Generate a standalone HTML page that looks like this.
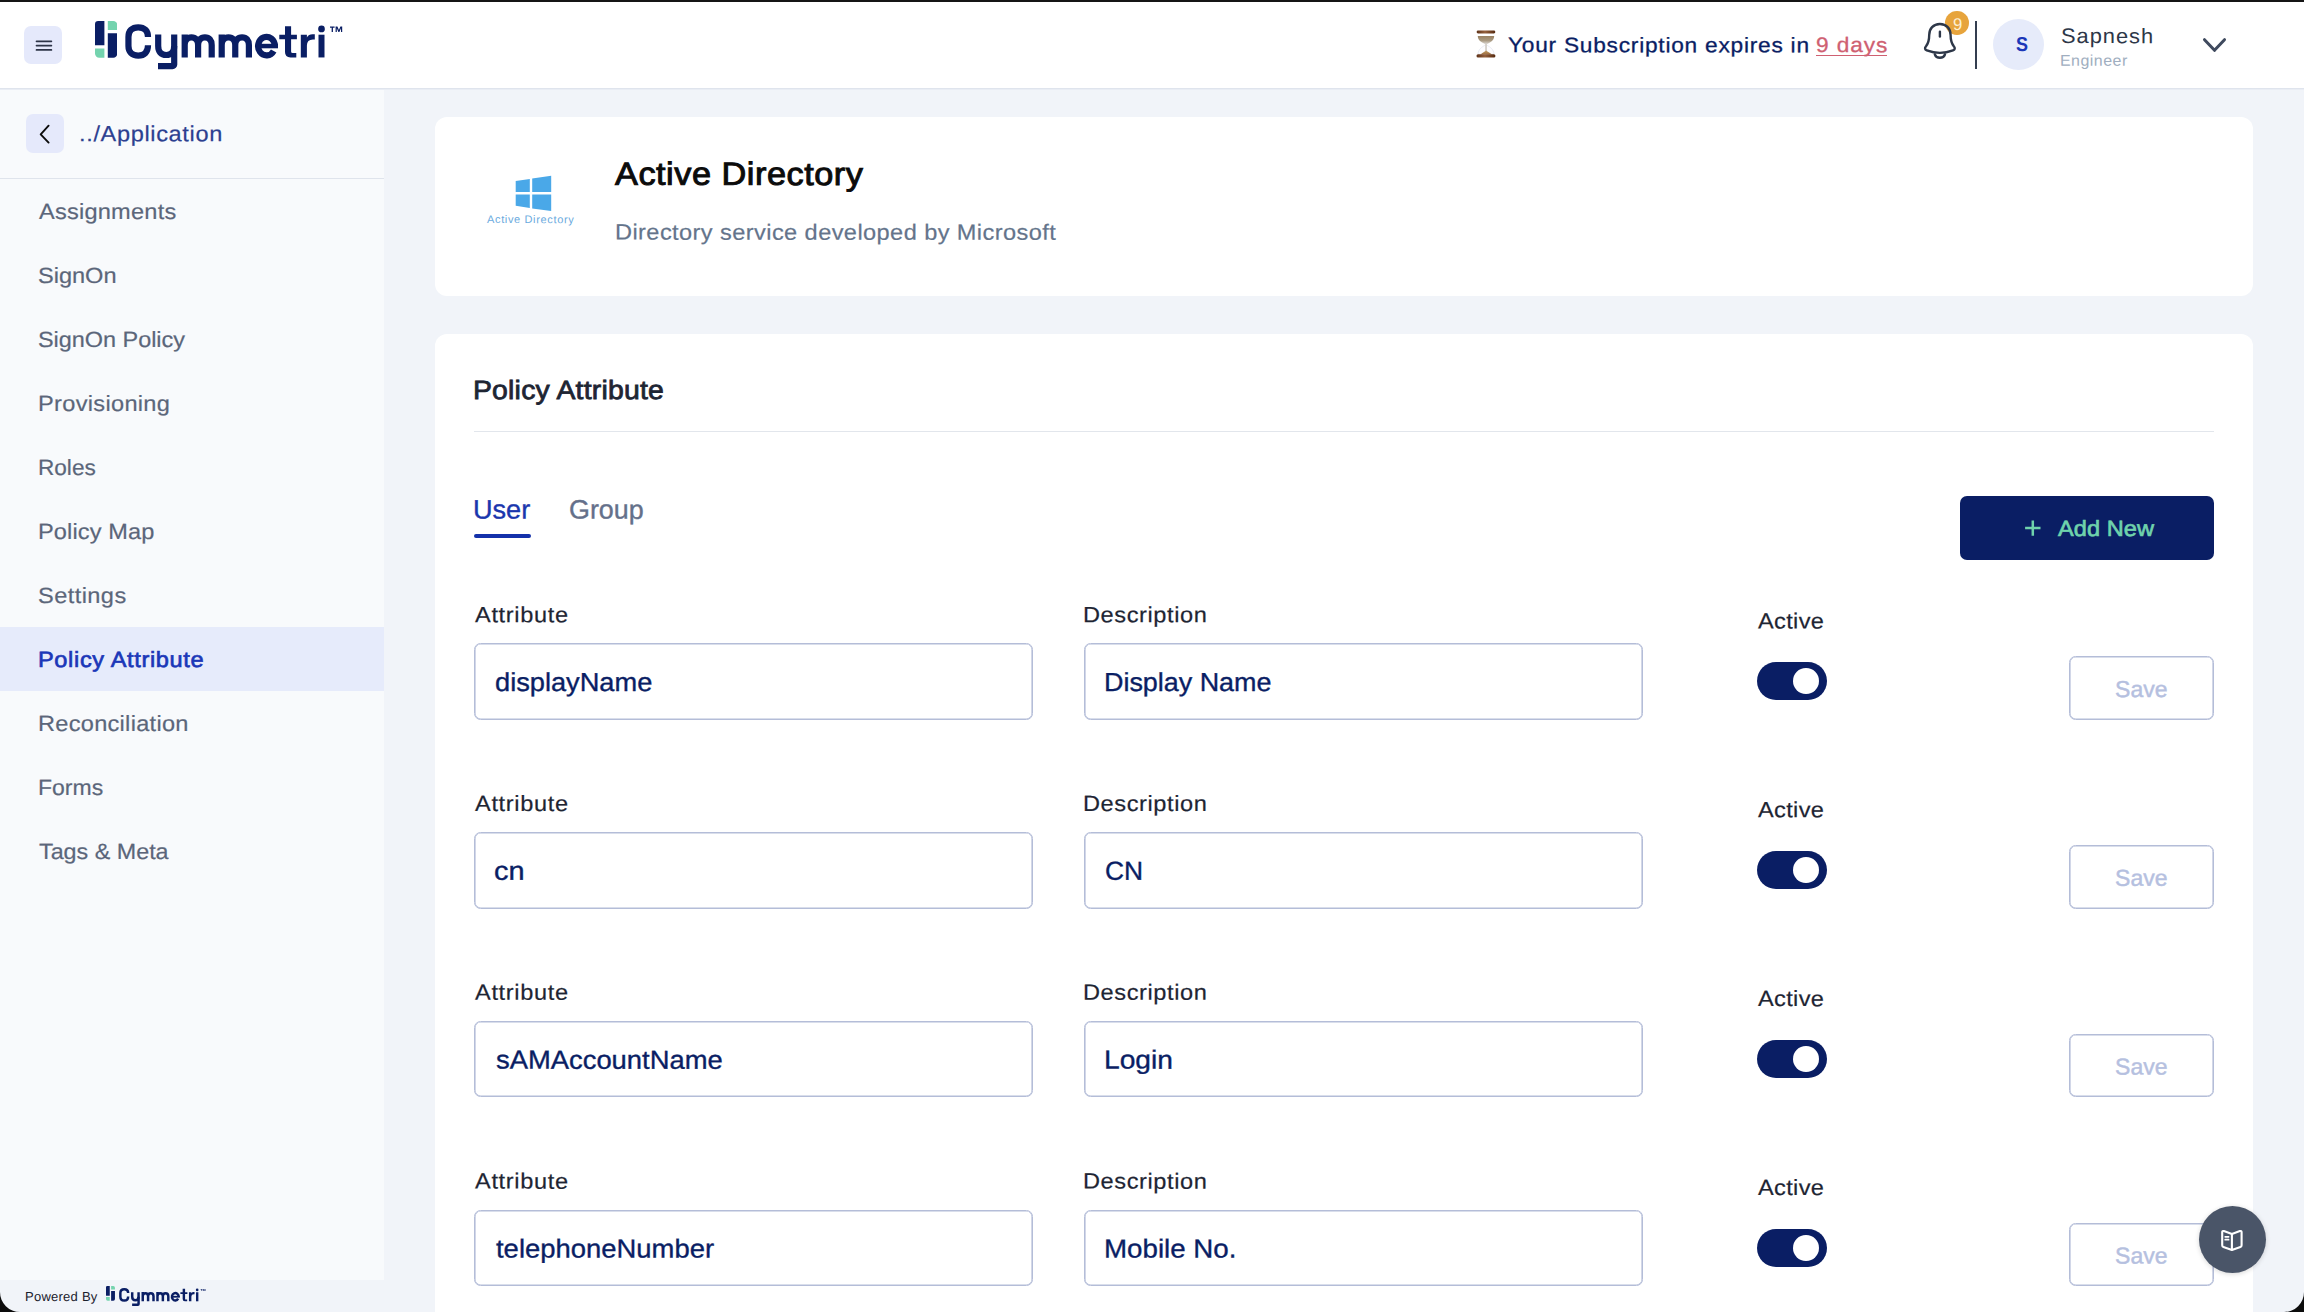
<!DOCTYPE html>
<html lang="en"><head><meta charset="utf-8"><title>Cymmetri - Policy Attribute</title>
<style>
html,body{margin:0;padding:0}
body{width:2304px;height:1312px;overflow:hidden;position:relative;background:#f1f4f9;font-family:"Liberation Sans",sans-serif}
.g{position:absolute;left:0;top:0;width:0;height:0}
.a{position:absolute}
.t{position:absolute;margin:0;white-space:pre;line-height:1;transform-origin:0 50%;font-family:"Liberation Sans",sans-serif;text-decoration:none}
.inp{position:absolute;box-sizing:border-box;border:1px solid #b4bdd8;box-shadow:inset 0 0 0 0.6px #b4bdd8;border-radius:6.5px;background:#fff;height:76.7px;width:559px}
.tog{position:absolute;width:70px;height:38.4px;border-radius:19.2px;background:#0a1e64}
.tog i{position:absolute;left:36.4px;top:6.4px;width:25.8px;height:25.8px;border-radius:50%;background:#fff}
.save{position:absolute;box-sizing:border-box;border:1px solid #b4bdd8;box-shadow:inset 0 0 0 0.6px #b4bdd8;border-radius:6.5px;background:#fff;left:2069px;width:145px;height:63.6px}
@media (max-width:1200px){html{zoom:.5}}
</style></head><body>
<header class="g">
<div class="a" style="left:0;top:0;width:2304px;height:88px;background:#fff"></div>
<div class="a" style="left:0;top:88px;width:2304px;height:1px;background:#dfe4ed"></div>
<div class="a" style="left:0;top:89px;width:2304px;height:1px;background:#e9edf4"></div>
<div class="a" style="left:24px;top:26px;width:38px;height:38px;border-radius:7px;background:#e5e9fb"></div>
<svg class="a" style="left:30px;top:36px" width="28" height="20" viewBox="30 36 28 20" stroke="#2d3447" stroke-width="1.7" stroke-linecap="round"><path d="M36.5 41.3H51.4M36.5 45.55H51.4M36.5 49.9H51.4"/></svg>
<svg class="a" style="left:94.5px;top:20.8px" width="22.60" height="36.90" viewBox="0 0 22.6 36.9">
<path d="M0 3.2A3.2 3.2 0 0 1 3.2 0H9.4V24.2H0Z" fill="#0a1e64"/>
<path d="M0 27.4H9.4V36.7H4.2A4.2 4.2 0 0 1 0 32.5Z" fill="#74d3ae"/>
<path d="M12.8 0H18.2A4.2 4.2 0 0 1 22.4 4.2V8.9H12.8Z" fill="#74d3ae"/>
<path d="M12.8 12.2H22.4V32.5A4.2 4.2 0 0 1 18.2 36.7H12.8Z" fill="#0a1e64"/>
</svg>
<svg class="a" style="left:120px;top:14px" width="230.00" height="62.00" viewBox="120 14 230 62"><g fill="none" stroke="#0a1e64" stroke-width="6.2" stroke-linejoin="miter">
<path d="M148 36.9C148.00 30.79 144.48 27.35 138.22 27.35C131.97 27.35 128.45 30.79 128.45 36.90V46.0C128.45 52.11 131.97 55.55 138.22 55.55C144.48 55.55 148.00 52.11 148.00 45.3"/>
<path d="M158.2 34.5V46.0C158.20 51.76 161.08 55.00 166.20 55.00C171.32 55.00 174.20 51.76 174.20 46.00"/>
<path d="M174.2 34.5V64.4A1.7 1.7 0 0 1 172.5 66.1H158"/>
<path d="M184.7 34.4V57.45M184.7 45C184.70 40.14 187.11 37.40 191.40 37.40C195.69 37.40 198.10 40.14 198.10 45.00V57.45M198.1 45C198.10 40.14 200.55 37.40 204.90 37.40C209.25 37.40 211.70 40.14 211.70 45.00V57.45"/>
<path d="M221.7 34.4V57.45M221.7 45C221.70 40.14 224.14 37.40 228.47 37.40C232.81 37.40 235.25 40.14 235.25 45.00V57.45M235.25 45C235.25 40.14 237.71 37.40 242.07 37.40C246.44 37.40 248.90 40.14 248.90 45.00V57.45"/>
<path d="M274.9 46.1A8.4 9.25 0 1 0 273.7 50.9"/>
</g>
<g fill="#0a1e64">
<rect x="258" y="43.8" width="20" height="4.5"/>
<path d="M285 26.2H291.1V34.7H296.9V39.2H291.1V51.4Q291.1 52.9 292.6 52.9H296.3V57.45H290.5Q285 57.45 285 52V39.2H279.3V34.7H285Z"/>
<path d="M300.8 34.7H306.9V37.4Q308.6 34.3 312.6 34.3H314.8V39.6H312.9Q306.9 39.6 306.9 45.6V57.45H300.8Z"/>
<rect x="318.5" y="34.7" width="6" height="22.75"/><circle cx="321.5" cy="28.9" r="3.35"/>
<path d="M330 26.5H334.6V27.7H332.95V31.9H331.65V27.7H330Z"/>
<path d="M335.6 31.9V26.5H337.4L338.9 30.1L340.4 26.5H342.2V31.9H341V28.3L339.4 31.9H338.4L336.8 28.3V31.9Z"/>
</g></svg>
<svg class="a" style="left:1476px;top:30px" width="20" height="28" viewBox="0 0 20 28">
<defs>
<linearGradient id="hgc" x1="0" x2="1" y1="0" y2="0"><stop offset="0" stop-color="#5e3118"/><stop offset=".45" stop-color="#94603c"/><stop offset="1" stop-color="#55290f"/></linearGradient>
<linearGradient id="hgs" x1="0" x2="0" y1="0" y2="1"><stop offset="0" stop-color="#9a8262"/><stop offset=".55" stop-color="#a8987f"/><stop offset="1" stop-color="#d9d5d0"/></linearGradient>
<linearGradient id="hgb" x1="0" x2="0" y1="0" y2="1"><stop offset="0" stop-color="#c7a26a"/><stop offset="1" stop-color="#9a6a3c"/></linearGradient>
</defs>
<path d="M8.9 15.2C6.5 16.8 2.2 19 2 24.3H18C17.8 19 13.5 16.8 11.1 15.2Z" fill="#fdfdff" stroke="#dfe3ee" stroke-width=".7"/>
<path d="M1.75 6.1H18.2C18.2 11 13 13.2 11.3 13.9H8.9C7 13.2 1.75 11 1.75 6.1Z" fill="url(#hgs)"/>
<rect x="9.1" y="13.6" width="1.9" height="7.4" fill="#d6d2cd"/>
<path d="M10.1 20.4C11.6 21.8 14.8 23 15.9 24.6H4.6C5.6 23 8.6 21.8 10.1 20.4Z" fill="url(#hgb)"/>
<rect x=".65" y=".5" width="18.65" height="3" rx="1.4" fill="url(#hgc)"/>
<rect x=".5" y="24.2" width="18.9" height="3.3" rx="1.5" fill="url(#hgc)"/>
</svg>
<div class="a" style="left:1815.6px;top:54.6px;width:71px;height:1.6px;background:#cf6071"></div>
<div class="a" style="left:1945.1px;top:10.9px;width:23.8px;height:23.8px;border-radius:50%;background:#e7a43c"></div>
<svg class="a" style="left:1920px;top:18px" width="40" height="44" viewBox="1920 18 40 44" fill="none" stroke="#2d3748" stroke-width="2.4" stroke-linecap="round" stroke-linejoin="round">
<path d="M1939.9 23.95C1946.5 23.95 1950.6 28.6 1950.6 35C1950.6 40 1951.2 43 1953.8 46.3C1955.3 48.1 1955 49.7 1953 50.4C1949 51.9 1944 52.9 1939.9 52.9C1935.8 52.9 1930.8 51.9 1926.8 50.4C1924.8 49.7 1924.5 48.1 1926 46.3C1928.6 43 1929.2 40 1929.2 35C1929.2 28.6 1933.3 23.95 1939.9 23.95Z"/>
<path d="M1934.8 54.3C1935.6 56.6 1937.5 57.8 1939.9 57.8C1942.3 57.8 1944.2 56.6 1945 54.3"/>
<path d="M1939.9 31.8V36.6"/>
</svg>
<div class="a" style="left:1975px;top:21px;width:2px;height:47.5px;background:#343e50"></div>
<div class="a" style="left:1992.8px;top:19px;width:51.2px;height:51.2px;border-radius:50%;background:#e6ebfa"></div>
<svg class="a" style="left:2200px;top:35px" width="30" height="20" viewBox="0 0 30 20" fill="none" stroke="#3f4a5e" stroke-width="3" stroke-linecap="round" stroke-linejoin="round"><path d="M4.5 4.7L14.5 15.3L24.5 4.7"/></svg>
<span class="t" style="left:1507.7px;top:34px;font-size:21px;font-weight:400;color:#0a1e64;letter-spacing:0.711px;transform:translateY(0.1px) scaleX(1.08) rotate(.03deg);-webkit-text-stroke:0.3px #0a1e64;">Your Subscription expires in</span>
<a class="t" style="left:1815.6px;top:34px;font-size:21px;font-weight:400;color:#cf6071;letter-spacing:0.818px;transform:translateY(0.1px) scaleX(1.08) rotate(.03deg);-webkit-text-stroke:0.3px #cf6071;">9 days</a>
<span class="t" style="left:1952.9px;top:16px;font-size:17px;font-weight:400;color:#fdf0d5;letter-spacing:0px;transform:scaleX(0.98) rotate(.03deg);">9</span>
<span class="t" style="left:2016.0px;top:34px;font-size:20px;font-weight:700;color:#1b37b8;letter-spacing:0px;transform:scaleX(0.9) rotate(.03deg);">S</span>
<span class="t" style="left:2060.8px;top:25px;font-size:21px;font-weight:400;color:#2d3748;letter-spacing:0.943px;transform:translateY(0.1px) scaleX(1.04) rotate(.03deg);">Sapnesh</span>
<span class="t" style="left:2059.97px;top:52px;font-size:15.5px;font-weight:400;color:#a0aec0;letter-spacing:0.456px;transform:translateY(0.7px) scaleX(1.03) rotate(.03deg);">Engineer</span>
</header>
<aside class="g"><nav>
<div class="a" style="left:0;top:90px;width:384px;height:1190px;background:#f8fafc"></div>
<div class="a" style="left:0;top:178px;width:384px;height:1.4px;background:#dfe4ec"></div>
<div class="a" style="left:0;top:627px;width:384px;height:64px;background:#e6ebfb"></div>
<div class="a" style="left:25.6px;top:114.4px;width:38.4px;height:38.4px;border-radius:7px;background:#e5e9fb"></div>
<svg class="a" style="left:36px;top:122px" width="18" height="25" viewBox="0 0 18 25" fill="none" stroke="#0c0c0c" stroke-width="1.9" stroke-linecap="round" stroke-linejoin="round"><path d="M12.6 3.7L4.7 12.3L12.6 20.6"/></svg>
<svg class="a" style="left:106px;top:1286.4px" width="9.04" height="14.76" viewBox="0 0 22.6 36.9">
<path d="M0 3.2A3.2 3.2 0 0 1 3.2 0H9.4V24.2H0Z" fill="#0a1e64"/>
<path d="M0 27.4H9.4V36.7H4.2A4.2 4.2 0 0 1 0 32.5Z" fill="#74d3ae"/>
<path d="M12.8 0H18.2A4.2 4.2 0 0 1 22.4 4.2V8.9H12.8Z" fill="#74d3ae"/>
<path d="M12.8 12.2H22.4V32.5A4.2 4.2 0 0 1 18.2 36.7H12.8Z" fill="#0a1e64"/>
</svg>
<svg class="a" style="left:116.9px;top:1283.9px" width="91.54" height="24.68" viewBox="120 14 230 62"><g fill="none" stroke="#0a1e64" stroke-width="6.2" stroke-linejoin="miter">
<path d="M148 36.9C148.00 30.79 144.48 27.35 138.22 27.35C131.97 27.35 128.45 30.79 128.45 36.90V46.0C128.45 52.11 131.97 55.55 138.22 55.55C144.48 55.55 148.00 52.11 148.00 45.3"/>
<path d="M158.2 34.5V46.0C158.20 51.76 161.08 55.00 166.20 55.00C171.32 55.00 174.20 51.76 174.20 46.00"/>
<path d="M174.2 34.5V64.4A1.7 1.7 0 0 1 172.5 66.1H158"/>
<path d="M184.7 34.4V57.45M184.7 45C184.70 40.14 187.11 37.40 191.40 37.40C195.69 37.40 198.10 40.14 198.10 45.00V57.45M198.1 45C198.10 40.14 200.55 37.40 204.90 37.40C209.25 37.40 211.70 40.14 211.70 45.00V57.45"/>
<path d="M221.7 34.4V57.45M221.7 45C221.70 40.14 224.14 37.40 228.47 37.40C232.81 37.40 235.25 40.14 235.25 45.00V57.45M235.25 45C235.25 40.14 237.71 37.40 242.07 37.40C246.44 37.40 248.90 40.14 248.90 45.00V57.45"/>
<path d="M274.9 46.1A8.4 9.25 0 1 0 273.7 50.9"/>
</g>
<g fill="#0a1e64">
<rect x="258" y="43.8" width="20" height="4.5"/>
<path d="M285 26.2H291.1V34.7H296.9V39.2H291.1V51.4Q291.1 52.9 292.6 52.9H296.3V57.45H290.5Q285 57.45 285 52V39.2H279.3V34.7H285Z"/>
<path d="M300.8 34.7H306.9V37.4Q308.6 34.3 312.6 34.3H314.8V39.6H312.9Q306.9 39.6 306.9 45.6V57.45H300.8Z"/>
<rect x="318.5" y="34.7" width="6" height="22.75"/><circle cx="321.5" cy="28.9" r="3.35"/>
<path d="M330 26.5H334.6V27.7H332.95V31.9H331.65V27.7H330Z"/>
<path d="M335.6 31.9V26.5H337.4L338.9 30.1L340.4 26.5H342.2V31.9H341V28.3L339.4 31.9H338.4L336.8 28.3V31.9Z"/>
</g></svg>
<a class="t" style="left:78.66px;top:123px;font-size:22px;font-weight:400;color:#2c4090;letter-spacing:0.61px;transform:translateY(0.2px) scaleX(1.07) rotate(.03deg);-webkit-text-stroke:0.2px #2c4090;">../Application</a>
<a class="t" style="left:39.3px;top:200px;font-size:22px;font-weight:400;color:#5b667a;letter-spacing:0.228px;transform:translateY(0.9px) scaleX(1.07) rotate(.03deg);-webkit-text-stroke:0.2px #5b667a;">Assignments</a>
<a class="t" style="left:38.23px;top:264px;font-size:22px;font-weight:400;color:#5b667a;letter-spacing:-0.005px;transform:translateY(0.9px) scaleX(1.07) rotate(.03deg);-webkit-text-stroke:0.2px #5b667a;">SignOn</a>
<a class="t" style="left:38.24px;top:328px;font-size:22px;font-weight:400;color:#5b667a;letter-spacing:-0.004px;transform:translateY(0.9px) scaleX(1.064) rotate(.03deg);-webkit-text-stroke:0.2px #5b667a;">SignOn Policy</a>
<a class="t" style="left:38.23px;top:392px;font-size:22px;font-weight:400;color:#5b667a;letter-spacing:0.311px;transform:translateY(0.9px) scaleX(1.07) rotate(.03deg);-webkit-text-stroke:0.2px #5b667a;">Provisioning</a>
<a class="t" style="left:38.27px;top:456px;font-size:22px;font-weight:400;color:#5b667a;letter-spacing:0.004px;transform:translateY(0.9px) scaleX(1.026) rotate(.03deg);-webkit-text-stroke:0.2px #5b667a;">Roles</a>
<a class="t" style="left:38.23px;top:520px;font-size:22px;font-weight:400;color:#5b667a;letter-spacing:0.124px;transform:translateY(0.9px) scaleX(1.07) rotate(.03deg);-webkit-text-stroke:0.2px #5b667a;">Policy Map</a>
<a class="t" style="left:38.23px;top:584px;font-size:22px;font-weight:400;color:#5b667a;letter-spacing:0.416px;transform:translateY(0.9px) scaleX(1.07) rotate(.03deg);-webkit-text-stroke:0.2px #5b667a;">Settings</a>
<a class="t" style="left:38.23px;top:648px;font-size:22px;font-weight:400;color:#1b37b8;letter-spacing:0.618px;transform:translateY(0.9px) scaleX(1.07) rotate(.03deg);-webkit-text-stroke:0.65px #1b37b8;">Policy Attribute</a>
<a class="t" style="left:38.23px;top:712px;font-size:22px;font-weight:400;color:#5b667a;letter-spacing:0.276px;transform:translateY(0.9px) scaleX(1.07) rotate(.03deg);-webkit-text-stroke:0.2px #5b667a;">Reconciliation</a>
<a class="t" style="left:38.25px;top:776px;font-size:22px;font-weight:400;color:#5b667a;letter-spacing:0.003px;transform:translateY(0.9px) scaleX(1.045) rotate(.03deg);-webkit-text-stroke:0.2px #5b667a;">Forms</a>
<a class="t" style="left:39.3px;top:840px;font-size:22px;font-weight:400;color:#5b667a;letter-spacing:-0.002px;transform:translateY(0.9px) scaleX(1.06) rotate(.03deg);-webkit-text-stroke:0.2px #5b667a;">Tags &amp; Meta</a>
<span class="t" style="left:24.6px;top:1290px;font-size:13px;font-weight:400;color:#1a202c;letter-spacing:0.245px;transform:rotate(.03deg);">Powered By</span>
</nav></aside>
<main class="g"><section>
<div class="a" style="left:435px;top:117px;width:1818px;height:179px;border-radius:12px;background:#fff"></div>
<svg class="a" style="left:514px;top:174px" width="40" height="40" viewBox="514 174 40 40"><g fill="#4aa8e8">
<path d="M515.7 181L529.8 179V192H515.7Z"/><path d="M532.2 178.4L551.2 175.7V192H532.2Z"/>
<path d="M515.7 194.6H529.8V207.9L515.7 205.8Z"/><path d="M532.2 194.6H551.2V211L532.2 208.4Z"/></g></svg>
<span class="t" style="left:487.4px;top:214px;font-size:11px;font-weight:400;color:#6aaade;letter-spacing:0.646px;transform:translateY(0.1px) rotate(.03deg);">Active Directory</span>
<h1 class="t" style="left:615.0px;top:157px;font-size:32px;font-weight:400;color:#0b0b0b;letter-spacing:0.509px;transform:translateY(0.8px) scaleX(1.07) rotate(.03deg);-webkit-text-stroke:0.95px #0b0b0b;">Active Directory</h1>
<p class="t" style="left:614.53px;top:221px;font-size:22px;font-weight:400;color:#64748b;letter-spacing:0.405px;transform:translateY(0.6px) scaleX(1.07) rotate(.03deg);-webkit-text-stroke:0.2px #64748b;">Directory service developed by Microsoft</p>
</section>
<section>
<div class="a" style="left:435px;top:334px;width:1818px;height:1000px;border-radius:12px;background:#fff"></div>
<div class="a" style="left:474px;top:430.5px;width:1740px;height:1.5px;background:#e2e6ec"></div>
<div class="a" style="left:474px;top:534.1px;width:57px;height:3.6px;border-radius:2px;background:#1431aa"></div>
<div class="a" style="left:1960px;top:496px;width:254px;height:64px;border-radius:7px;background:#0a1e64"></div>
<svg class="a" style="left:2022px;top:518px" width="22" height="22" viewBox="2022 518 22 22" fill="none" stroke="#6fd3ac" stroke-width="2.5"><path d="M2032.8 520.4V535.8M2025.1 528.1H2040.5"/></svg>
<div class="inp" style="left:473.7px;top:643.1px"></div>
<div class="inp" style="left:1083.7px;top:643.1px"></div>
<div class="tog" style="left:1757px;top:662.1px"><i></i></div>
<div class="save" style="top:656.2px"></div>
<div class="inp" style="left:473.7px;top:831.9px"></div>
<div class="inp" style="left:1083.7px;top:831.9px"></div>
<div class="tog" style="left:1757px;top:850.9px"><i></i></div>
<div class="save" style="top:845.0px"></div>
<div class="inp" style="left:473.7px;top:1020.7px"></div>
<div class="inp" style="left:1083.7px;top:1020.7px"></div>
<div class="tog" style="left:1757px;top:1039.7px"><i></i></div>
<div class="save" style="top:1033.8px"></div>
<div class="inp" style="left:473.7px;top:1209.5px"></div>
<div class="inp" style="left:1083.7px;top:1209.5px"></div>
<div class="tog" style="left:1757px;top:1228.5px"><i></i></div>
<div class="save" style="top:1222.6px"></div>
<h2 class="t" style="left:472.66px;top:377px;font-size:26.5px;font-weight:400;color:#1e2533;letter-spacing:0.2px;transform:scaleX(1.07) rotate(.03deg);-webkit-text-stroke:0.78px #1e2533;">Policy Attribute</h2>
<a class="t" style="left:473.06px;top:496px;font-size:26.5px;font-weight:400;color:#1a36ad;letter-spacing:-0.005px;transform:translateY(0.6px) scaleX(1.022) rotate(.03deg);-webkit-text-stroke:0.35px #1a36ad;">User</a>
<a class="t" style="left:569.39px;top:496px;font-size:26.5px;font-weight:400;color:#64708a;letter-spacing:-0.005px;transform:translateY(0.6px) scaleX(1.014) rotate(.03deg);-webkit-text-stroke:0.35px #64708a;">Group</a>
<span class="t" style="left:2058.1px;top:517px;font-size:22px;font-weight:400;color:#6fd3ac;letter-spacing:0.072px;transform:translateY(0.9px) scaleX(1.07) rotate(.03deg);-webkit-text-stroke:0.65px #6fd3ac;">Add New</span>
<label class="t" style="left:474.6px;top:604px;font-size:22px;font-weight:400;color:#1e2533;letter-spacing:0.641px;transform:translateY(0.2px) scaleX(1.07) rotate(.03deg);-webkit-text-stroke:0.2px #1e2533;">Attribute</label>
<label class="t" style="left:1083.03px;top:604px;font-size:22px;font-weight:400;color:#1e2533;letter-spacing:0.565px;transform:translateY(0.2px) scaleX(1.07) rotate(.03deg);-webkit-text-stroke:0.2px #1e2533;">Description</label>
<label class="t" style="left:1757.6px;top:610px;font-size:22px;font-weight:400;color:#1e2533;letter-spacing:0.327px;transform:translateY(0.5px) scaleX(1.07) rotate(.03deg);-webkit-text-stroke:0.2px #1e2533;">Active</label>
<span class="t" style="left:494.55px;top:669px;font-size:26px;font-weight:400;color:#0a1e64;letter-spacing:-0.002px;transform:scaleX(1.047) rotate(.03deg);-webkit-text-stroke:0.35px #0a1e64;">displayName</span>
<span class="t" style="left:1103.63px;top:669px;font-size:26px;font-weight:400;color:#0a1e64;letter-spacing:-0.004px;transform:scaleX(1.035) rotate(.03deg);-webkit-text-stroke:0.35px #0a1e64;">Display Name</span>
<span class="t" style="left:2115.0px;top:678px;font-size:23px;font-weight:400;color:#b5c0df;letter-spacing:0.056px;transform:rotate(.03deg);-webkit-text-stroke:0.45px #b5c0df;">Save</span>
<label class="t" style="left:474.6px;top:793px;font-size:22px;font-weight:400;color:#1e2533;letter-spacing:0.641px;transform:scaleX(1.07) rotate(.03deg);-webkit-text-stroke:0.2px #1e2533;">Attribute</label>
<label class="t" style="left:1083.03px;top:793px;font-size:22px;font-weight:400;color:#1e2533;letter-spacing:0.565px;transform:scaleX(1.07) rotate(.03deg);-webkit-text-stroke:0.2px #1e2533;">Description</label>
<label class="t" style="left:1757.6px;top:799px;font-size:22px;font-weight:400;color:#1e2533;letter-spacing:0.327px;transform:translateY(0.3px) scaleX(1.07) rotate(.03deg);-webkit-text-stroke:0.2px #1e2533;">Active</label>
<span class="t" style="left:494.49px;top:857px;font-size:26px;font-weight:400;color:#0a1e64;letter-spacing:-0.0px;transform:translateY(0.8px) scaleX(1.112) rotate(.03deg);-webkit-text-stroke:0.35px #0a1e64;">cn</span>
<span class="t" style="left:1104.68px;top:857px;font-size:26px;font-weight:400;color:#0a1e64;letter-spacing:0.002px;transform:translateY(0.8px) scaleX(1.015) rotate(.03deg);-webkit-text-stroke:0.35px #0a1e64;">CN</span>
<span class="t" style="left:2115.0px;top:866px;font-size:23px;font-weight:400;color:#b5c0df;letter-spacing:0.056px;transform:translateY(0.8px) rotate(.03deg);-webkit-text-stroke:0.45px #b5c0df;">Save</span>
<label class="t" style="left:474.6px;top:981px;font-size:22px;font-weight:400;color:#1e2533;letter-spacing:0.641px;transform:translateY(0.8px) scaleX(1.07) rotate(.03deg);-webkit-text-stroke:0.2px #1e2533;">Attribute</label>
<label class="t" style="left:1083.03px;top:981px;font-size:22px;font-weight:400;color:#1e2533;letter-spacing:0.565px;transform:translateY(0.8px) scaleX(1.07) rotate(.03deg);-webkit-text-stroke:0.2px #1e2533;">Description</label>
<label class="t" style="left:1757.6px;top:988px;font-size:22px;font-weight:400;color:#1e2533;letter-spacing:0.327px;transform:translateY(0.1px) scaleX(1.07) rotate(.03deg);-webkit-text-stroke:0.2px #1e2533;">Active</label>
<span class="t" style="left:495.6px;top:1046px;font-size:26px;font-weight:400;color:#0a1e64;letter-spacing:-0.002px;transform:translateY(0.6px) scaleX(1.053) rotate(.03deg);-webkit-text-stroke:0.35px #0a1e64;">sAMAccountName</span>
<span class="t" style="left:1103.53px;top:1046px;font-size:26px;font-weight:400;color:#0a1e64;letter-spacing:-0.002px;transform:translateY(0.6px) scaleX(1.084) rotate(.03deg);-webkit-text-stroke:0.35px #0a1e64;">Login</span>
<span class="t" style="left:2115.0px;top:1055px;font-size:23px;font-weight:400;color:#b5c0df;letter-spacing:0.056px;transform:translateY(0.6px) rotate(.03deg);-webkit-text-stroke:0.45px #b5c0df;">Save</span>
<label class="t" style="left:474.6px;top:1170px;font-size:22px;font-weight:400;color:#1e2533;letter-spacing:0.641px;transform:translateY(0.6px) scaleX(1.07) rotate(.03deg);-webkit-text-stroke:0.2px #1e2533;">Attribute</label>
<label class="t" style="left:1083.03px;top:1170px;font-size:22px;font-weight:400;color:#1e2533;letter-spacing:0.565px;transform:translateY(0.6px) scaleX(1.07) rotate(.03deg);-webkit-text-stroke:0.2px #1e2533;">Description</label>
<label class="t" style="left:1757.6px;top:1176px;font-size:22px;font-weight:400;color:#1e2533;letter-spacing:0.327px;transform:translateY(0.9px) scaleX(1.07) rotate(.03deg);-webkit-text-stroke:0.2px #1e2533;">Active</label>
<span class="t" style="left:495.6px;top:1235px;font-size:26px;font-weight:400;color:#0a1e64;letter-spacing:0.005px;transform:translateY(0.4px) scaleX(1.055) rotate(.03deg);-webkit-text-stroke:0.35px #0a1e64;">telephoneNumber</span>
<span class="t" style="left:1103.57px;top:1235px;font-size:26px;font-weight:400;color:#0a1e64;letter-spacing:0.005px;transform:translateY(0.4px) scaleX(1.065) rotate(.03deg);-webkit-text-stroke:0.35px #0a1e64;">Mobile No.</span>
<span class="t" style="left:2115.0px;top:1244px;font-size:23px;font-weight:400;color:#b5c0df;letter-spacing:0.056px;transform:translateY(0.4px) rotate(.03deg);-webkit-text-stroke:0.45px #b5c0df;">Save</span>
</section></main>
<div class="g">
<div class="a" style="left:2198.5px;top:1206px;width:67.4px;height:67.4px;border-radius:50%;background:#4a5568;box-shadow:0 1px 5px rgba(0,0,0,.16)"></div>
<svg class="a" style="left:2216px;top:1224px" width="32" height="32" viewBox="2216 1224 32 32" fill="none" stroke="#fff" stroke-width="2.1" stroke-linecap="round" stroke-linejoin="round">
<path d="M2231.9 1234L2223.9 1231.1Q2222.2 1230.5 2222.2 1232.3V1245.2Q2222.2 1246.5 2223.4 1246.9L2231.9 1249.9L2240.4 1246.9Q2241.6 1246.5 2241.6 1245.2V1232.3Q2241.6 1230.5 2239.9 1231.1Z"/>
<path d="M2231.9 1234V1249.6"/>
<path d="M2225.2 1236.8H2228.6M2225.2 1239.7H2228.6" stroke-width="1.7"/>
</svg>
</div>
<div class="g">
<div class="a" style="left:0;top:0;width:2304px;height:1.5px;background:#151515"></div>
<svg class="a" style="left:0;top:1292px" width="20" height="20" viewBox="0 0 20 20"><path d="M0 0V20H20A20 20 0 0 1 0 0Z" fill="#0c0c0c"/></svg>
<svg class="a" style="left:2284px;top:1292px" width="20" height="20" viewBox="0 0 20 20"><path d="M20 0V20H0A20 20 0 0 0 20 0Z" fill="#0c0c0c"/></svg>
</div>
</body></html>
